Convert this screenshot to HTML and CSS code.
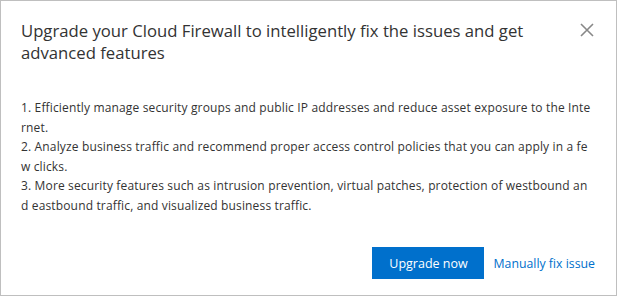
FILE: index.html
```html
<!DOCTYPE html>
<html>
<head>
    <title>Upgrade Cloud Firewall</title>
    <link rel="stylesheet" href="styles.css">
</head>
<body>
    <div class="dialog">
        <div class="dialog-header">
            <div class="dialog-title">Upgrade your Cloud Firewall to intelligently fix the issues and get advanced features</div>
            <span class="close-icon">
                <svg width="14" height="14" viewBox="0 0 14 14">
                    <path d="M1 1L13 13M13 1L1 13" stroke="#888" stroke-width="1.6" fill="none"/>
                </svg>
            </span>
        </div>
        <div class="dialog-body">
            <p>1. Efficiently manage security groups and public IP addresses and reduce asset exposure to the Internet.</p>
            <p>2. Analyze business traffic and recommend proper access control policies that you can apply in a few clicks.</p>
            <p>3. More security features such as intrusion prevention, virtual patches, protection of westbound and eastbound traffic, and visualized business traffic.</p>
        </div>
        <div class="dialog-footer">
            <button class="primary-button">Upgrade now</button>
            <a class="link-button" href="#">Manually fix issue</a>
        </div>
    </div>
</body>
</html>
```

FILE: styles.css
```css
body {
    margin: 0;
    font-family: 'Open Sans', 'Noto Sans', sans-serif;
    color: #333;
    background: #fff;
}

.dialog {
    width: 617px;
    height: 296px;
    box-sizing: border-box;
    border: 1px solid #bfbfbf;
    background: #fff;
    display: flex;
    flex-direction: column;
}

.dialog-header {
    display: flex;
    justify-content: space-between;
    align-items: flex-start;
    padding: 19px 22px 0 20px;
}

.dialog-title {
    font-size: 16.7px;
    line-height: 22px;
    color: #333;
    width: 520px;
}

.close-icon {
    display: flex;
    margin-top: 3px;
}

.dialog-body {
    padding: 34px 22px 0 20px;
    font-size: 12px;
    line-height: 19.6px;
    color: #333;
    word-break: break-all;
    letter-spacing: 0.15px;
}

.dialog-body p {
    margin: 0;
}

.dialog-footer {
    margin-top: auto;
    display: flex;
    justify-content: flex-end;
    align-items: center;
    gap: 9px;
    padding: 0 21px 16px 0;
}

.primary-button {
    width: 112px;
    height: 32px;
    background-color: #0070cc;
    color: #fff;
    border: none;
    font-family: inherit;
    font-size: 12.5px;
    cursor: pointer;
}

.link-button {
    color: #0070cc;
    font-size: 12.3px;
    text-decoration: none;
}
```
